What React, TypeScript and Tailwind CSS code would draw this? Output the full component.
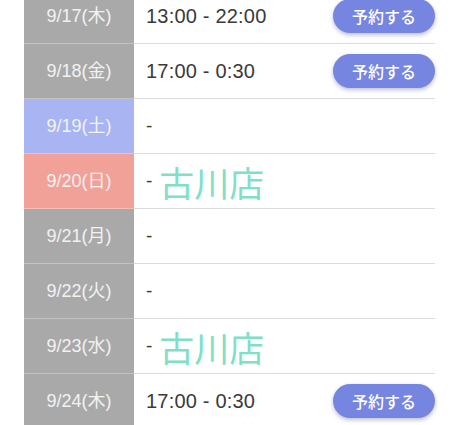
import React from 'react';

type Row = {
  date: string;
  kind: 'weekday' | 'sat' | 'sun';
  time?: string;
  shop?: string;
  reserve?: boolean;
};

const rows: Row[] = [
  { date: '9/17(木)', kind: 'weekday', time: '13:00 - 22:00', reserve: true },
  { date: '9/18(金)', kind: 'weekday', time: '17:00 - 0:30', reserve: true },
  { date: '9/19(土)', kind: 'sat' },
  { date: '9/20(日)', kind: 'sun', shop: '古川店' },
  { date: '9/21(月)', kind: 'weekday' },
  { date: '9/22(火)', kind: 'weekday' },
  { date: '9/23(水)', kind: 'weekday', shop: '古川店' },
  { date: '9/24(木)', kind: 'weekday', time: '17:00 - 0:30', reserve: true },
];

const dateBg = {
  weekday: 'bg-[#a9a9a9]',
  sat: 'bg-[#a9b5f3]',
  sun: 'bg-[#f2a198]',
};

export default function App() {
  return (
    <main
      className="w-[460px] h-[425px] overflow-hidden bg-white"
      style={{ fontFamily: '"Liberation Sans", "Noto Sans CJK JP", sans-serif' }}
    >
      <div className="ml-[24px] -mt-[11px] w-[411px]">
        {rows.map((row, idx) => (
          <div key={idx} className="flex h-[55px] border-b border-[#dcdcdc]">
            <div
              className={`${dateBg[row.kind]} w-[110px] shrink-0 flex items-center justify-center pt-px text-[18px] text-[#f2f2f2] border-b border-white/30 -mb-px`}
            >
              {row.date}
            </div>
            <div className="flex-1 flex items-center pl-[12px] text-[#3a3a3a]">
              {row.time ? (
                <span className="text-[20px] tracking-[0.2px]">{row.time}</span>
              ) : (
                <span className="text-[19px]">-</span>
              )}
              {row.shop && (
                <span
                  className="ml-[7px] text-[35px] leading-none text-[#80dfc7]"
                  style={{ fontFamily: '"Noto Sans CJK JP", sans-serif' }}
                >
                  {row.shop}
                </span>
              )}
              {row.reserve && (
                <button
                  className="ml-auto h-[34px] w-[102px] rounded-full bg-[#7585e0] text-white text-[16px] font-medium shadow-[0_2px_4px_rgba(60,70,140,0.35)]"
                  style={{ fontFamily: '"Noto Sans CJK JP", sans-serif' }}
                >
                  予約する
                </button>
              )}
            </div>
          </div>
        ))}
      </div>
    </main>
  );
}
